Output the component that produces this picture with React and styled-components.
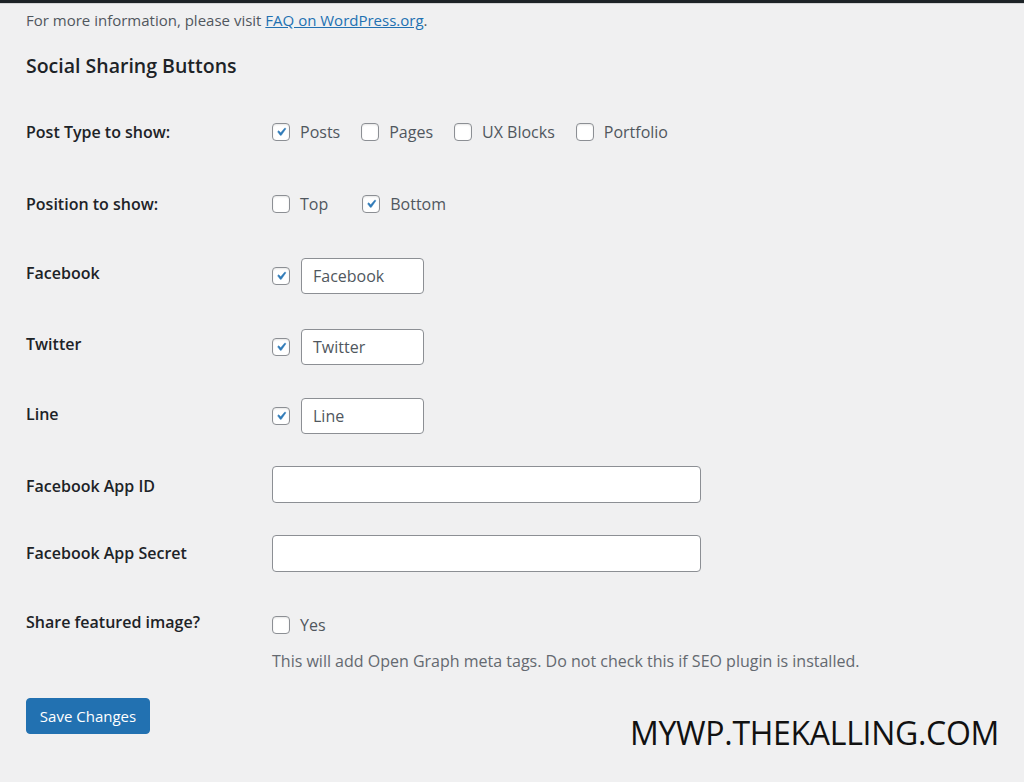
import React from "react";
import styled, { createGlobalStyle } from "styled-components";

const Global = createGlobalStyle`
  html, body { margin: 0; padding: 0; }
  body {
    background: #f0f0f1;
    font-family: "Open Sans", "Noto Sans", sans-serif;
    color: #1d2327;
    width: 1024px;
    height: 782px;
    overflow: hidden;
  }
`;

const TopBar = styled.div`
  height: 3px;
  background: #1d2327;
  border-bottom: 1px solid #d4d4d6;
`;

const Wrap = styled.div`
  padding: 0 25px 0 26px;
`;

const Info = styled.p`
  margin: 6px 0 0;
  font-size: 15px;
  line-height: 20px;
  color: #50575e;
`;

const Link = styled.a`
  color: #2271b1;
  text-decoration: underline;
`;

const Heading = styled.h2`
  margin: 23px 0 0;
  font-size: 19.5px;
  line-height: 26px;
  font-weight: 600;
  color: #1d2327;
`;

const Form = styled.div`
  margin-top: 17px;
  display: flex;
  flex-direction: column;
`;

const Row = styled.div`
  display: flex;
  align-items: center;
  height: ${(p) => p.$h}px;
`;

const TopRow = styled.div`
  display: flex;
  align-items: flex-start;
`;

const Label = styled.div`
  width: 246px;
  flex: none;
  font-size: 16px;
  line-height: 20px;
  font-weight: 600;
  color: #1d2327;
  padding-top: ${(p) => p.$pt || 0}px;
  margin-top: ${(p) => p.$mt || 0}px;
`;

const Field = styled.div`
  display: flex;
  flex-direction: column;
  padding-top: ${(p) => p.$pt || 0}px;
`;

const Line = styled.div`
  display: flex;
  align-items: center;
  gap: ${(p) => p.$gap || 0}px;
`;

const Option = styled.label`
  display: flex;
  align-items: center;
  gap: 10px;
  font-size: 16px;
  line-height: 20px;
  color: #50575e;
`;

const Box = styled.span`
  width: 18px;
  height: 18px;
  box-sizing: border-box;
  border: 1px solid #8c8f94;
  border-radius: 4px;
  background: #fff;
  display: flex;
  align-items: center;
  justify-content: center;
  flex: none;
  box-shadow: inset 0 1px 2px rgba(0, 0, 0, 0.1);
`;

const TextInput = styled.div`
  box-sizing: border-box;
  width: ${(p) => p.$w}px;
  height: ${(p) => p.$hgt || 36}px;
  margin-left: ${(p) => p.$ml || 0}px;
  border: 1px solid #8c8f94;
  border-radius: 4px;
  background: #fff;
  padding: 0 11px;
  display: flex;
  align-items: center;
  font-size: 16px;
  color: #50575e;
`;

const Desc = styled.p`
  margin: 16px 0 0;
  font-size: 16px;
  line-height: 20px;
  color: #646970;
`;

const Footer = styled.div`
  margin-top: 27px;
  display: flex;
  justify-content: space-between;
  align-items: flex-start;
`;

const Button = styled.button`
  box-sizing: border-box;
  width: 124px;
  height: 36px;
  background: #2271b1;
  border: 1px solid #2271b1;
  border-radius: 4px;
  color: #fff;
  font-family: "Open Sans", "Noto Sans", sans-serif;
  font-size: 15px;
  padding: 0;
  cursor: pointer;
`;

const Watermark = styled.div`
  margin-top: 15px;
  font-size: 32px;
  line-height: 40px;
  color: #111;
  letter-spacing: -0.3px;
`;

const Check = () => (
  <svg width="20" height="20" viewBox="0 0 20 20">
    <path
      d="M14.83 4.89l1.34.94-5.81 8.38H9.02L5.78 9.67l1.34-1.25 2.57 2.4z"
      fill="#2f7ab8"
      stroke="#2f7ab8"
      strokeWidth="0.6"
      strokeLinejoin="round"
    />
  </svg>
);

const Checkbox = ({ checked }) => <Box>{checked && <Check />}</Box>;

const Opt = ({ checked, children }) => (
  <Option>
    <Checkbox checked={checked} />
    {children}
  </Option>
);

export default function App() {
  return (
    <>
      <Global />
      <TopBar />
      <Wrap>
        <Info>
          For more information, please visit <Link href="#">FAQ on WordPress.org</Link>.
        </Info>
        <Heading>Social Sharing Buttons</Heading>
        <Form>
          <Row $h={72}>
            <Label>Post Type to show:</Label>
            <Line $gap={21}>
              <Opt checked>Posts</Opt>
              <Opt>Pages</Opt>
              <Opt>UX Blocks</Opt>
              <Opt>Portfolio</Opt>
            </Line>
          </Row>
          <Row $h={72}>
            <Label>Position to show:</Label>
            <Line $gap={34}>
              <Opt>Top</Opt>
              <Opt checked>Bottom</Opt>
            </Line>
          </Row>
          <Row $h={71}>
            <Label $mt={-6}>Facebook</Label>
            <Line>
              <Checkbox checked />
              <TextInput $w={123} $ml={11}>Facebook</TextInput>
            </Line>
          </Row>
          <Row $h={71}>
            <Label $mt={-6}>Twitter</Label>
            <Line>
              <Checkbox checked />
              <TextInput $w={123} $ml={11}>Twitter</TextInput>
            </Line>
          </Row>
          <Row $h={68}>
            <Label $mt={-4}>Line</Label>
            <Line>
              <Checkbox checked />
              <TextInput $w={123} $ml={11}>Line</TextInput>
            </Line>
          </Row>
          <Row $h={68}>
            <Label $mt={4}>Facebook App ID</Label>
            <TextInput $w={429} $hgt={37} />
          </Row>
          <Row $h={70}>
            <Label>Facebook App Secret</Label>
            <TextInput $w={429} $hgt={37} />
          </Row>
          <TopRow>
            <Label $pt={24}>Share featured image?</Label>
            <Field $pt={27}>
              <Line>
                <Opt>Yes</Opt>
              </Line>
              <Desc>
                This will add Open Graph meta tags. Do not check this if SEO plugin is installed.
              </Desc>
            </Field>
          </TopRow>
        </Form>
        <Footer>
          <Button>Save Changes</Button>
          <Watermark>MYWP.THEKALLING.COM</Watermark>
        </Footer>
      </Wrap>
    </>
  );
}
